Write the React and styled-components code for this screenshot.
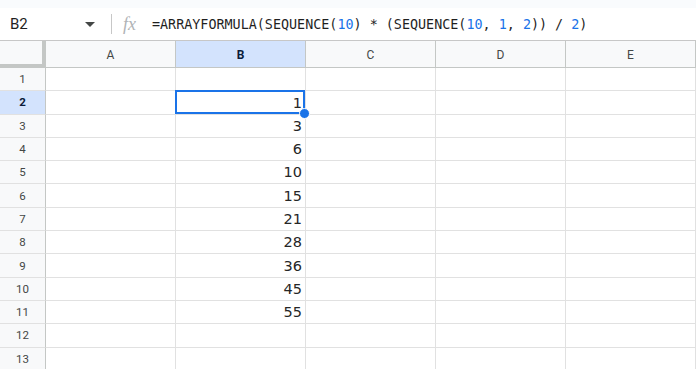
import React from "react";
import styled, { createGlobalStyle } from "styled-components";

const Global = createGlobalStyle`
  html, body { margin: 0; padding: 0; background: #fff; }
  body { font-family: Roboto, "Liberation Sans", sans-serif; overflow: hidden; }
`;

const Page = styled.div`
  width: 696px;
  height: 369px;
  display: flex;
  flex-direction: column;
  background: #fff;
  overflow: hidden;
`;

const TopStrip = styled.div`
  height: 8px;
  background: #f9fbfd;
  flex: none;
`;

const FormulaBar = styled.div`
  height: 32px;
  flex: none;
  display: flex;
  align-items: center;
  border-bottom: 1px solid #c7c7c7;
  background: #fff;
`;

const NameBox = styled.div`
  width: 103px;
  padding-left: 10px;
  box-sizing: border-box;
  display: flex;
  align-items: center;
  justify-content: space-between;
  padding-right: 8px;
  font-size: 15px;
  color: #1f1f1f;
`;

const Caret = styled.span`
  width: 0;
  height: 0;
  border-left: 5px solid transparent;
  border-right: 5px solid transparent;
  border-top: 5px solid #444746;
`;

const Divider = styled.span`
  width: 1px;
  height: 20px;
  background: #c7c7c7;
  margin-left: 8px;
`;

const Fx = styled.span`
  font-family: "Liberation Serif", serif;
  font-style: italic;
  font-size: 18px;
  color: #b0b3b6;
  margin-left: 11px;
  width: 29px;
`;

const Formula = styled.div`
  font-family: "DejaVu Sans Mono", monospace;
  font-size: 13.4px;
  color: #1f1f1f;
  white-space: pre;
`;

const Num = styled.span`
  color: #1a73e8;
`;

const Grid = styled.div`
  display: grid;
  grid-template-columns: 46px repeat(5, 130px);
  grid-template-rows: 27px repeat(13, 23.3px);
`;

const Corner = styled.div`
  background: #f8f9fa;
  border-right: 4px solid #c4c7c5;
  border-bottom: 4px solid #c4c7c5;
  box-sizing: border-box;
`;

const ColHead = styled.div`
  background: ${(p) => (p.$sel ? "#d3e3fd" : "#f8f9fa")};
  border-right: 1px solid #c4c7c5;
  border-bottom: 1px solid #c4c7c5;
  box-sizing: border-box;
  display: flex;
  align-items: center;
  justify-content: center;
  font-size: 12px;
  font-weight: ${(p) => (p.$sel ? 700 : 400)};
  color: ${(p) => (p.$sel ? "#0b1b3a" : "#444746")};
  padding-top: 1px;
`;

const RowHead = styled.div`
  background: ${(p) => (p.$sel ? "#d3e3fd" : "#f8f9fa")};
  border-right: 1px solid #c4c7c5;
  border-bottom: 1px solid #e1e1e1;
  box-sizing: border-box;
  display: flex;
  align-items: center;
  justify-content: center;
  font-size: 11.5px;
  font-weight: ${(p) => (p.$sel ? 700 : 400)};
  color: ${(p) => (p.$sel ? "#0b1b3a" : "#444746")};
`;

const Cell = styled.div`
  position: relative;
  border-right: 1px solid #e1e1e1;
  border-bottom: 1px solid #e1e1e1;
  box-sizing: border-box;
  display: flex;
  align-items: flex-end;
  justify-content: flex-end;
  padding: 0 3px 1px 0;
  font-family: "DejaVu Sans", sans-serif;
  font-size: 14.5px;
  color: #262626;
  line-height: 19px;
`;

const Selection = styled.div`
  position: absolute;
  left: -1px;
  top: -1px;
  right: 0;
  bottom: 0;
  border: 2px solid #1a73e8;
  pointer-events: none;
`;

const Handle = styled.div`
  position: absolute;
  right: -5px;
  bottom: -5px;
  width: 9px;
  height: 9px;
  border-radius: 50%;
  background: #1a73e8;
  border: 1px solid #fff;
  z-index: 2;
`;

const cols = ["A", "B", "C", "D", "E"];
const values = ["", "1", "3", "6", "10", "15", "21", "28", "36", "45", "55", "", ""];

export default function App() {
  return (
    <Page>
      <Global />
      <TopStrip />
      <FormulaBar>
        <NameBox>
          B2
          <Caret />
        </NameBox>
        <Divider />
        <Fx>fx</Fx>
        <Formula>
          =ARRAYFORMULA(SEQUENCE(<Num>10</Num>) * (SEQUENCE(<Num>10</Num>, <Num>1</Num>, <Num>2</Num>)) / <Num>2</Num>)
        </Formula>
      </FormulaBar>
      <Grid>
        <Corner />
        {cols.map((c) => (
          <ColHead key={c} $sel={c === "B"}>
            {c}
          </ColHead>
        ))}
        {values.map((v, i) => (
          <React.Fragment key={i}>
            <RowHead $sel={i === 1}>{i + 1}</RowHead>
            {cols.map((c) => (
              <Cell key={c}>
                {c === "B" ? v : ""}
                {c === "B" && i === 1 && (
                  <>
                    <Selection />
                    <Handle />
                  </>
                )}
              </Cell>
            ))}
          </React.Fragment>
        ))}
      </Grid>
    </Page>
  );
}
